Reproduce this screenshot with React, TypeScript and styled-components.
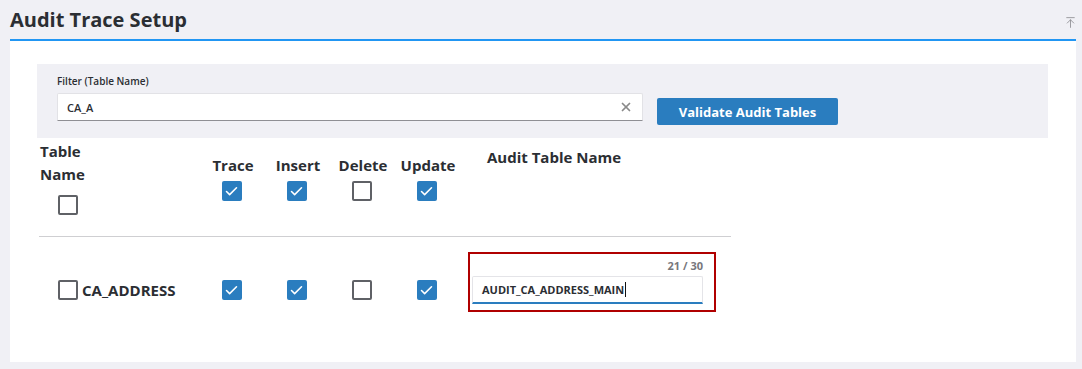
import React from "react";
import styled, { createGlobalStyle } from "styled-components";
import { X, ArrowUpToLine, Check } from "lucide-react";

const GlobalStyle = createGlobalStyle`
    body {
        margin: 0;
        background: #f0f0f5;
        font-family: "Open Sans", "Liberation Sans", sans-serif;
        color: #2b2e33;
    }
`;

const Header = styled.div`
    display: flex;
    align-items: center;
    justify-content: space-between;
    height: 39px;
    padding: 0 6px 0 10px;
`;

const Title = styled.h1`
    margin: 0;
    font-size: 20px;
    font-weight: 700;
    color: #2b2e33;
    line-height: 39px;
    margin-top: -1px;
`;

const TopButton = styled.div`
    display: flex;
    color: #8a8a8f;
    margin-top: 6px;
    margin-right: -1px;
`;

const Card = styled.div`
    margin: 0 6px 0 10px;
    border-top: 2px solid #2196f3;
    background: #fff;
    height: 323px;
    padding: 23px 28px 0 27px;
    box-sizing: border-box;
`;

const FilterPanel = styled.div`
    display: flex;
    align-items: flex-end;
    gap: 14px;
    height: 74px;
    background: #f0f0f5;
    padding: 0 20px 17px 20px;
    box-sizing: border-box;
`;

const FilterField = styled.div`
    display: flex;
    flex-direction: column;
`;

const Label = styled.label`
    font-size: 10px;
    font-weight: 600;
    color: #2b2e33;
    margin-bottom: 5px;
`;

const InputBox = styled.div`
    display: flex;
    align-items: center;
    justify-content: space-between;
    width: 586px;
    height: 28px;
    box-sizing: border-box;
    background: #fff;
    border: 1px solid #e2e2e6;
    border-bottom: 1px solid #8f8f94;
    border-radius: 2px 2px 0 0;
    padding: 0 9px 0 9px;
    font-size: 11px;
    font-weight: 600;
`;

const ClearIcon = styled.span`
    display: flex;
    color: #8a8a8a;
`;

const PrimaryButton = styled.button`
    width: 181px;
    height: 27px;
    margin-bottom: -4px;
    border: none;
    border-radius: 2px;
    background: #2a7dbf;
    color: #fff;
    font-family: inherit;
    font-size: 13px;
    font-weight: 700;
`;

const Table = styled.div`
    width: 692px;
    margin-left: 2px;
`;

const Grid = styled.div<{ $header?: boolean }>`
    display: grid;
    grid-template-columns: 160px 65px 65px 65px 65px 1fr;
    align-items: ${(p) => (p.$header ? "center" : "start")};
    ${(p) => (p.$header ? "border-bottom: 1px solid #cfcfd2; padding: 2px 0 21px;" : "")}
`;

const NameHead = styled.div`
    display: flex;
    flex-direction: column;
    align-items: flex-start;
    font-size: 15px;
    font-weight: 700;
    line-height: 23px;
    width: 60px;
    margin-left: 1px;
`;

const NameHeadBox = styled.div`
    display: flex;
    margin: 9px 0 0 18px;
`;

const ColHead = styled.div`
    display: flex;
    flex-direction: column;
    align-items: center;
    font-size: 15px;
    font-weight: 700;
    line-height: 23px;
    gap: 4px;
`;

const HeadText = styled.span`
    margin-left: 3px;
`;

const AuditHead = styled.div`
    align-self: start;
    font-size: 15px;
    font-weight: 700;
    line-height: 23px;
    padding: 6px 0 0 28px;
`;

const Box = styled.span<{ $checked?: boolean }>`
    display: flex;
    align-items: center;
    justify-content: center;
    width: 20px;
    height: 20px;
    box-sizing: border-box;
    border-radius: 2px;
    flex-shrink: 0;
    background: ${(p) => (p.$checked ? "#2a7dbf" : "#fff")};
    border: ${(p) => (p.$checked ? "none" : "2px solid #5f6166")};
    color: #fff;
`;

const NameCell = styled.div`
    display: flex;
    align-items: center;
    gap: 4px;
    padding: 43px 0 0 19px;
    font-size: 15px;
    font-weight: 700;
`;

const CheckCell = styled.div`
    display: flex;
    justify-content: center;
    padding-top: 43px;
`;

const AuditCell = styled.div`
    padding: 15px 0 0 9px;
`;

const ErrorFrame = styled.div`
    width: 248px;
    height: 60px;
    box-sizing: border-box;
    border: 2px solid #b00000;
    padding: 4px 11px 0 2px;
    display: flex;
    flex-direction: column;
`;

const Counter = styled.span`
    align-self: flex-end;
    font-size: 11px;
    font-weight: 700;
    color: #77777c;
    line-height: 16px;
    margin-bottom: 2px;
`;

const AuditInput = styled.div`
    height: 28px;
    box-sizing: border-box;
    border: 1px solid #e4e4e8;
    border-bottom: 2px solid #2a7dbf;
    border-radius: 2px 2px 0 0;
    display: flex;
    align-items: center;
    padding-left: 9px;
    font-size: 11px;
    font-weight: 700;
    color: #2b2e33;
`;

const Caret = styled.span`
    display: inline-block;
    width: 1px;
    height: 15px;
    background: #111;
    margin-left: 1px;
`;

const CheckBox = ({ checked }: { checked?: boolean }) => (
    <Box $checked={checked}>{checked && <Check size={15} strokeWidth={2.5} />}</Box>
);

const flags = [true, true, false, true];

const App = () => {
    return (
        <>
            <GlobalStyle />
            <Header>
                <Title>Audit Trace Setup</Title>
                <TopButton>
                    <ArrowUpToLine size={13} strokeWidth={1.5} />
                </TopButton>
            </Header>
            <Card>
                <FilterPanel>
                    <FilterField>
                        <Label>Filter (Table Name)</Label>
                        <InputBox>
                            <span>CA_A</span>
                            <ClearIcon>
                                <X size={14} strokeWidth={3} />
                            </ClearIcon>
                        </InputBox>
                    </FilterField>
                    <PrimaryButton>Validate Audit Tables</PrimaryButton>
                </FilterPanel>
                <Table>
                    <Grid $header>
                        <NameHead>
                            <span>Table Name</span>
                            <NameHeadBox>
                                <CheckBox />
                            </NameHeadBox>
                        </NameHead>
                        {["Trace", "Insert", "Delete", "Update"].map((h, i) => (
                            <ColHead key={h}>
                                <HeadText>{h}</HeadText>
                                <CheckBox checked={flags[i]} />
                            </ColHead>
                        ))}
                        <AuditHead>Audit Table Name</AuditHead>
                    </Grid>
                    <Grid>
                        <NameCell>
                            <CheckBox />
                            CA_ADDRESS
                        </NameCell>
                        {flags.map((f, i) => (
                            <CheckCell key={i}>
                                <CheckBox checked={f} />
                            </CheckCell>
                        ))}
                        <AuditCell>
                            <ErrorFrame>
                                <Counter>21 / 30</Counter>
                                <AuditInput>
                                    AUDIT_CA_ADDRESS_MAIN
                                    <Caret />
                                </AuditInput>
                            </ErrorFrame>
                        </AuditCell>
                    </Grid>
                </Table>
            </Card>
        </>
    );
};

export default App;
